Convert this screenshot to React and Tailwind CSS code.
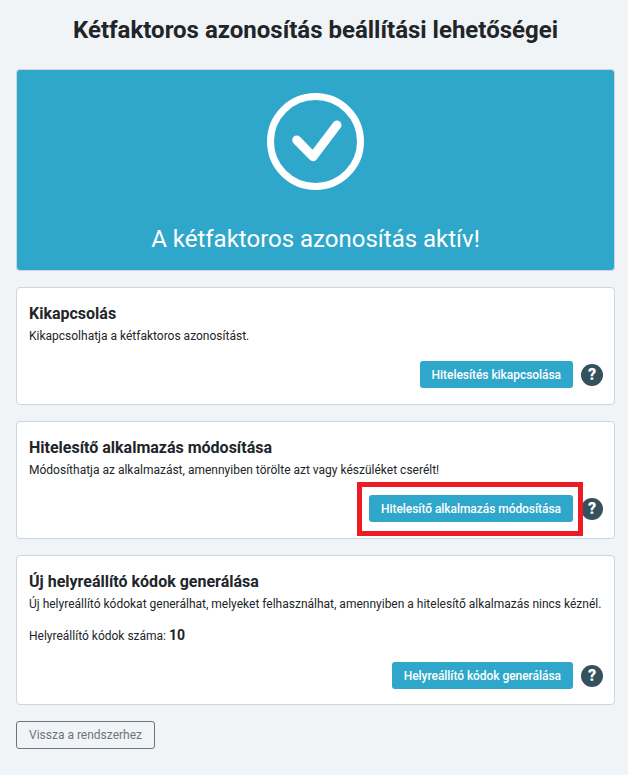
const font = { fontFamily: 'Roboto, sans-serif' };

function HelpIcon() {
  return (
    <span className="flex h-[22px] w-[22px] shrink-0 items-center justify-center rounded-full bg-[#34515e] text-[16px] font-black leading-none text-white">
      ?
    </span>
  );
}

function ActionButton({ children }) {
  return (
    <button className="h-[27px] rounded-[3px] bg-[#2fa7cb] px-3 text-[12px] font-medium leading-none tracking-[-0.05px] text-white">
      {children}
    </button>
  );
}

function Card({ title, children, action, highlight, actionClass = 'mb-[16px]' }) {
  return (
    <section className="rounded-[4px] border border-[#ccd5e0] bg-white pl-3 pr-[11px] pt-[16px]">
      <h2 className="text-[16px] font-bold leading-[20px] text-[#212529]">{title}</h2>
      {children}
      <div className={`mt-[16px] flex items-center justify-end gap-2 ${actionClass}`}>
        {highlight ? (
          <div className="relative flex">
            <ActionButton>{action}</ActionButton>
            <div className="absolute -bottom-[14px] -left-[12px] -right-[10px] -top-[13px] border-[5px] border-[#ed1c24]" />
          </div>
        ) : (
          <ActionButton>{action}</ActionButton>
        )}
        <HelpIcon />
      </div>
    </section>
  );
}

export default function App() {
  return (
    <div style={font} className="h-[775px] overflow-hidden bg-[#f1f4f6] pl-4 pr-[13px] pt-[14px] text-[#212529]">
      <h1 className="text-center text-[24px] font-bold leading-[32px] text-[#212529]">
        Kétfaktoros azonosítás beállítási lehetőségei
      </h1>

      <div className="mt-[23px] flex h-[202px] flex-col items-center rounded-[4px] border border-[#ccd5e0] bg-[#2fa7cb] pt-[23px] text-white">
        <svg width="97" height="97" viewBox="0 0 97 97" fill="none" stroke="white">
          <circle cx="48.5" cy="48.5" r="45" strokeWidth="7" />
          <path d="M29.7 47 L46 63.7 L70 32" strokeWidth="9" strokeLinecap="round" strokeLinejoin="round" />
        </svg>
        <p className="mt-[31px] text-[24px] font-normal leading-[36px]">A kétfaktoros azonosítás aktív!</p>
      </div>

      <div className="mt-[16px] flex flex-col gap-[16px]">
        <Card title="Kikapcsolás" action="Hitelesítés kikapcsolása">
          <p className="mt-[3px] text-[12px] leading-[18px]">Kikapcsolhatja a kétfaktoros azonosítást.</p>
        </Card>
        <Card title="Hitelesítő alkalmazás módosítása" action="Hitelesítő alkalmazás módosítása" highlight>
          <p className="mt-[3px] text-[12px] leading-[18px]">
            Módosíthatja az alkalmazást, amennyiben törölte azt vagy készüléket cserélt!
          </p>
        </Card>
        <Card title="Új helyreállító kódok generálása" action="Helyreállító kódok generálása" actionClass="mb-[15px]">
          <p className="mt-[3px] text-[12px] leading-[18px]">
            Új helyreállító kódokat generálhat, melyeket felhasználhat, amennyiben a hitelesítő alkalmazás nincs kéznél.
          </p>
          <p className="mt-[12px] text-[12px] leading-[20px]">
            Helyreállító kódok száma: <strong className="text-[14px] font-bold">10</strong>
          </p>
        </Card>
      </div>

      <button className="mt-[16px] h-[28px] w-[139px] rounded-[3px] border border-[#6c757d] text-[12px] leading-none text-[#6c757d]">
        Vissza a rendszerhez
      </button>
    </div>
  );
}
